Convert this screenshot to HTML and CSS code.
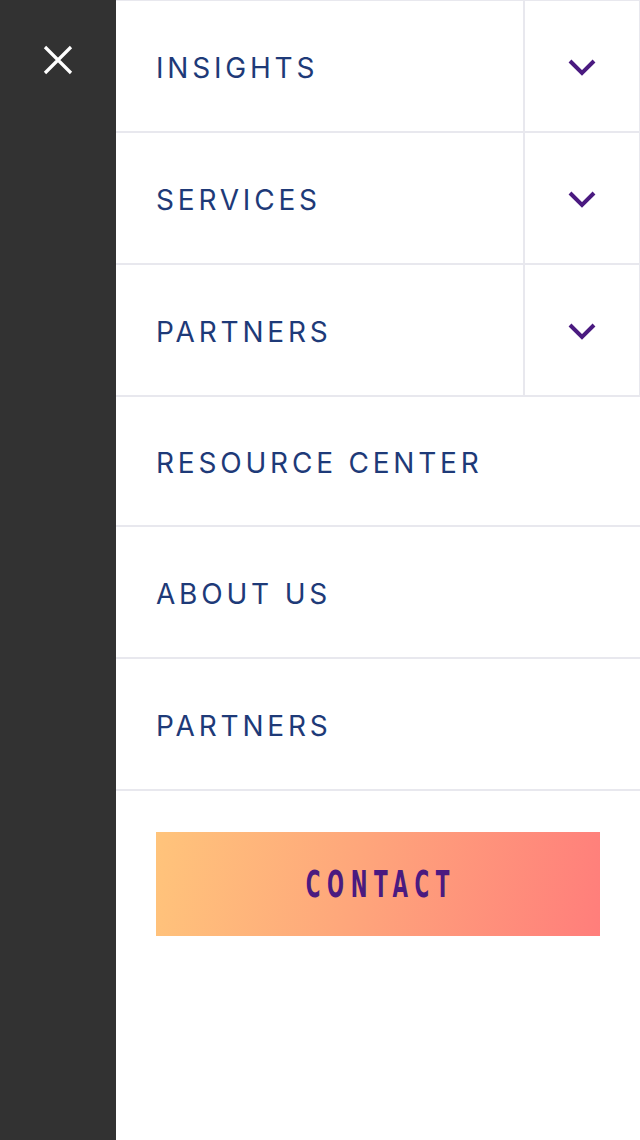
FILE: index.html
```html
<!DOCTYPE html>
<html lang="en">
<head>
<meta charset="utf-8">
<title>Menu</title>
<link rel="stylesheet" href="styles.css">
</head>
<body>
<div class="layout">
  <aside class="sidebar">
    <button class="close" aria-label="Close menu">
      <svg width="30" height="30" viewBox="0 0 30 30"><path d="M2 2 L28 28 M28 2 L2 28" stroke="#fff" stroke-width="3.2" fill="none"/></svg>
    </button>
  </aside>
  <nav class="menu">
    <ul class="list">
      <li class="item">
        <a class="link" href="#">INSIGHTS</a>
        <span class="toggle"><svg width="30" height="20" viewBox="0 0 30 20"><path d="M3 3 L15 15 L27 3" stroke="#4a1a80" stroke-width="4" fill="none"/></svg></span>
      </li>
      <li class="item">
        <a class="link" href="#">SERVICES</a>
        <span class="toggle"><svg width="30" height="20" viewBox="0 0 30 20"><path d="M3 3 L15 15 L27 3" stroke="#4a1a80" stroke-width="4" fill="none"/></svg></span>
      </li>
      <li class="item">
        <a class="link" href="#">PARTNERS</a>
        <span class="toggle"><svg width="30" height="20" viewBox="0 0 30 20"><path d="M3 3 L15 15 L27 3" stroke="#4a1a80" stroke-width="4" fill="none"/></svg></span>
      </li>
      <li class="item item--short"><a class="link" href="#">RESOURCE CENTER</a></li>
      <li class="item"><a class="link" href="#">ABOUT US</a></li>
      <li class="item"><a class="link" href="#">PARTNERS</a></li>
    </ul>
    <div class="cta-wrap">
      <a class="cta" href="#"><span class="cta-text">CONTACT</span></a>
    </div>
  </nav>
</div>
</body>
</html>
```

FILE: styles.css
```css
* { box-sizing: border-box; }
html, body { margin: 0; padding: 0; }
body {
  background: #fff;
  font-family: Inter, "Noto Sans", sans-serif;
}
.layout {
  display: flex;
  min-height: 1140px;
}
.sidebar {
  width: 116px;
  flex: none;
  background: #323232;
  display: flex;
  justify-content: center;
  align-items: flex-start;
  padding-top: 45px;
}
.close {
  background: none;
  border: 0;
  padding: 0;
  width: 30px;
  height: 30px;
  display: block;
  cursor: pointer;
}
.close svg { display: block; }
.menu {
  flex: 1;
}
.list {
  list-style: none;
  margin: 0;
  padding: 0;
  border-top: 1px solid #e8e8ee;
}
.item {
  display: flex;
  height: 132px;
  border-bottom: 2px solid #e8e8ee;
}
.item--short { height: 130px; }
.link {
  flex: 1;
  display: flex;
  align-items: center;
  padding-left: 40px;
  padding-top: 4px;
  color: #1e3a78;
  text-decoration: none;
  font-size: 28px;
  letter-spacing: 3.8px;
  font-weight: 400;
}
.toggle {
  width: 117px;
  flex: none;
  border-left: 2px solid #e8e8ee;
  border-right: 1px solid #e8e8ee;
  display: flex;
  align-items: center;
  justify-content: center;
  padding-top: 4px;
}
.toggle svg { display: block; }
.cta-wrap {
  padding: 41px 40px 0 40px;
}
.cta {
  display: flex;
  align-items: center;
  justify-content: center;
  height: 104px;
  background: linear-gradient(100deg, #ffc47b 0%, #fea67b 45%, #ff7e7b 100%);
  text-decoration: none;
  overflow: hidden;
}
.cta-text {
  display: inline-block;
  font-family: "DejaVu Sans", sans-serif;
  font-stretch: condensed;
  font-weight: 700;
  font-size: 37px;
  line-height: 1;
  letter-spacing: 11px;
  padding-left: 11px;
  color: #4a1a80;
  transform: scaleX(0.6);
}
```
